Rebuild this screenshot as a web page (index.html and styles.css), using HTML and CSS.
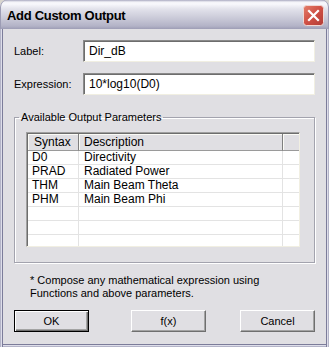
FILE: index.html
```html
<!DOCTYPE html>
<html>
<head>
<meta charset="utf-8">
<link rel="stylesheet" href="styles.css">
</head>
<body>
<div class="window">
  <div class="titlebar">
    <span class="title">Add Custom Output</span>
    <span class="close">
      <svg width="21" height="21" viewBox="0 0 21 21">
        <defs>
          <linearGradient id="cg" x1="0" y1="0" x2="1" y2="1">
            <stop offset="0" stop-color="#e4806c"/>
            <stop offset="0.5" stop-color="#cf4f44"/>
            <stop offset="1" stop-color="#b13c37"/>
          </linearGradient>
        </defs>
        <rect x="0.5" y="0.5" width="20" height="20" rx="3" fill="url(#cg)" stroke="#f0d8d4"/>
        <path d="M6 6 L15 15 M15 6 L6 15" stroke="#fff" stroke-width="2.2" stroke-linecap="square"/>
      </svg>
    </span>
  </div>
  <div class="client">
    <div class="field">
      <span class="lbl">Label:</span>
      <div class="input">Dir_dB</div>
    </div>
    <div class="field">
      <span class="lbl">Expression:</span>
      <div class="input">10*log10(D0)</div>
    </div>
    <fieldset class="group">
      <legend>Available Output Parameters</legend>
      <div class="list">
        <div class="hdr">
          <div class="hc c1">Syntax</div>
          <div class="hc c2">Description</div>
          <div class="hc c3"></div>
        </div>
        <div class="row"><div class="cell c1">D0</div><div class="cell c2">Directivity</div><div class="cell c3"></div></div>
        <div class="row"><div class="cell c1">PRAD</div><div class="cell c2">Radiated Power</div><div class="cell c3"></div></div>
        <div class="row"><div class="cell c1">THM</div><div class="cell c2">Main Beam Theta</div><div class="cell c3"></div></div>
        <div class="row"><div class="cell c1">PHM</div><div class="cell c2">Main Beam Phi</div><div class="cell c3"></div></div>
        <div class="row"><div class="cell c1"></div><div class="cell c2"></div><div class="cell c3"></div></div>
        <div class="row"><div class="cell c1"></div><div class="cell c2"></div><div class="cell c3"></div></div>
        <div class="row last"><div class="cell c1"></div><div class="cell c2"></div><div class="cell c3"></div></div>
      </div>
    </fieldset>
    <p class="note">* Compose any mathematical expression using<br>Functions and above parameters.</p>
    <div class="buttons">
      <button class="btn default">OK</button>
      <button class="btn fx">f(x)</button>
      <button class="btn cancel">Cancel</button>
    </div>
  </div>
</div>
</body>
</html>
```
FILE: styles.css
```css
html, body {
  margin: 0;
  padding: 0;
  background: #d9d6cf;
}
.window {
  width: 329px;
  height: 347px;
  display: flex;
  flex-direction: column;
  font-family: "Liberation Sans", Arial, sans-serif;
  font-size: 11px;
  color: #000;
}
.titlebar {
  height: 29px;
  flex: none;
  box-sizing: border-box;
  border-radius: 7px 7px 0 0;
  background: linear-gradient(#a9a9c0 0px, #f3f3f8 2px, #f8f8fc 4px, #e2e2eb 9px, #cacad8 18px, #b3b3c7 26px, #9d9db5 29px);
  box-shadow: inset 1px 0 #9c9cb4, inset -1px 0 #9c9cb4;
  display: flex;
  align-items: center;
  padding: 0 5px 0 7px;
}
.title {
  font-family: "Liberation Sans", Arial, sans-serif;
  font-weight: bold;
  font-size: 13px;
  letter-spacing: -0.3px;
  color: #000;
  flex: 1;
  margin-top: 1px;
}
.close {
  width: 21px;
  height: 21px;
  display: block;
  margin-top: 1px;
}
.close svg { display: block; }
.client {
  flex: 1;
  background: #e0dfe3;
  padding: 11px 14px 0 14px;
  box-shadow:
    inset 1px 0 #b4b4c8, inset 2px 0 #dedeea, inset 3px 0 #7c7c9a,
    inset -1px 0 #b4b4c8, inset -2px 0 #dedeea, inset -3px 0 #7c7c9a,
    inset 0 -1px #b4b4c8, inset 0 -2px #dedeea, inset 0 -3px #7c7c9a;
  display: flex;
  flex-direction: column;
}
.field {
  display: flex;
  align-items: center;
  height: 22px;
  margin-bottom: 11px;
}
.lbl {
  width: 69px;
  flex: none;
}
.input {
  width: 232px;
  height: 22px;
  box-sizing: border-box;
  background: #fff;
  border: 1px solid;
  border-color: #8a8a8a #f1efe2 #f1efe2 #8a8a8a;
  box-shadow: inset 1px 1px #6d6d6d;
  padding: 0 0 0 5px;
  display: flex;
  align-items: center;
  font-size: 12px;
}
.group {
  margin: 5px 0 0 0;
  padding: 8px 14px 15px 11px;
  border: 1px solid #a3a3ae;
  box-shadow: inset 1px 1px #fff, 1px 1px #fff;
  min-width: 0;
}
.group legend {
  padding: 0 2px;
  margin-left: -7px;
  line-height: 13px;
  font-size: 11px;
}
.list {
  width: 274px;
  height: 115px;
  box-sizing: border-box;
  background: #fff;
  border: 1px solid;
  border-color: #a0a0a0 #f1efe2 #f1efe2 #a0a0a0;
  box-shadow: inset 1px 1px #6d6d6d;
  padding: 1px 0 0 1px;
  overflow: hidden;
}
.hdr {
  display: flex;
  height: 17px;
}
.hc {
  box-sizing: border-box;
  background: #e0dfe3;
  border-right: 1px solid #7f7f7f;
  border-bottom: 1px solid #9a9a9a;
  box-shadow: inset 1px 1px #fbfbf6;
  display: flex;
  align-items: center;
  padding-left: 6px;
  font-size: 12px;
}
.c1 { width: 51px; flex: none; }
.c2 { width: 204px; flex: none; }
.c3 { flex: 1; }
.hc.c2 { padding-left: 5px; }
.hc.c3 { border-right: none; }
.row {
  display: flex;
  height: 14px;
}
.cell {
  box-sizing: border-box;
  border-right: 1px solid #e3e3e3;
  border-bottom: 1px solid #e3e3e3;
  line-height: 13px;
  padding-left: 4px;
  font-size: 12px;
  white-space: nowrap;
}
.cell.c2 { padding-left: 5px; }
.cell.c3 { border-right: none; }
.note {
  margin: 11px 0 0 16px;
  line-height: 13px;
  font-size: 11px;
}
.buttons {
  display: flex;
  margin-top: 10px;
}
.btn {
  width: 75px;
  height: 22px;
  box-sizing: border-box;
  font-family: "Liberation Sans", Arial, sans-serif;
  font-size: 11px;
  color: #000;
  background: #e0dfe3;
  border: 1px solid;
  border-color: #fff #6f6f6f #6f6f6f #fff;
  box-shadow: inset -1px -1px #a3a3a3;
  padding: 0;
  margin: 0;
}
.btn.default {
  border-color: #000;
  box-shadow: inset 1px 1px #fff, inset -1px -1px #6f6f6f, inset -2px -2px #a3a3a3;
}
.btn.fx { margin-left: 42px; }
.btn.cancel { margin-left: 34px; }
```
